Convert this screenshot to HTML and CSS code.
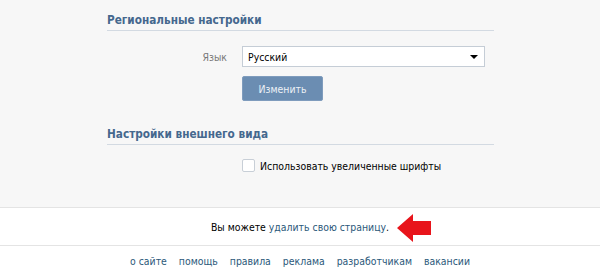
FILE: index.html
```html
<!DOCTYPE html>
<html lang="ru">
<head>
  <meta charset="UTF-8">
  <title>Настройки</title>
  <link rel="stylesheet" href="styles.css">
</head>
<body>

  <!-- Settings -->
  <div class="settings">
    <div class="column">
      <h2 class="section-title">Региональные настройки</h2>
      <div class="row">
        <span class="label">Язык</span>
        <div class="select">
          <span>Русский</span>
          <span class="select-arrow"></span>
        </div>
      </div>
      <div class="row">
        <span class="label"></span>
        <button class="button">Изменить</button>
      </div>

      <h2 class="section-title second">Настройки внешнего вида</h2>
      <div class="row check-row">
        <span class="label"></span>
        <span class="checkbox"></span>
        <span>Использовать увеличенные шрифты</span>
      </div>
    </div>
  </div>

  <!-- Delete page -->
  <div class="delete-band">
    <span class="delete-text">
      Вы можете <a href="#">удалить свою страницу</a>.
      <svg class="red-arrow" width="34" height="28" viewBox="0 0 34 28">
        <polygon points="0,14 16,0 16,7 34,7 34,21 16,21 16,28" fill="#e8141b"/>
      </svg>
    </span>
  </div>

  <!-- Footer -->
  <div class="footer">
    <a href="#">о сайте</a>
    <a href="#">помощь</a>
    <a href="#">правила</a>
    <a href="#">реклама</a>
    <a href="#">разработчикам</a>
    <a href="#">вакансии</a>
  </div>

</body>
</html>
```

FILE: styles.css
```css
body {
  font-family: "DejaVu Sans Condensed", "DejaVu Sans", sans-serif;
  font-size: 10.4px;
  color: #000;
  background: white;
  margin: 0;
}

a {
  color: #2b587a;
  text-decoration: none;
}

.settings {
  background: #f7f7f7;
  padding: 12px 0 35px;
  border-bottom: 1px solid #e4e4e4;
}

.column {
  width: 387px;
  margin-left: 107px;
}

.section-title {
  margin: 0;
  font-size: 11.7px;
  line-height: 16px;
  font-weight: bold;
  color: #45688e;
  padding-bottom: 2px;
  border-bottom: 1px solid #d3dae2;
}

.section-title.second {
  margin-top: 25px;
}

.row {
  display: flex;
  align-items: center;
  margin-top: 9px;
}

.section-title + .row {
  margin-top: 15px;
}

.label {
  width: 120px;
  margin-right: 15px;
  text-align: right;
  color: #777;
}

.select {
  width: 243px;
  height: 21px;
  background: white;
  border: 1px solid #c5cdd6;
  display: flex;
  align-items: center;
  justify-content: space-between;
  padding: 0 6px 0 5px;
  box-sizing: border-box;
}

.select-arrow {
  width: 0;
  height: 0;
  border-left: 4px solid transparent;
  border-right: 4px solid transparent;
  border-top: 4px solid #000;
}

.button {
  width: 81px;
  height: 25px;
  background: #6b8db2;
  color: #eef2f7;
  font-family: inherit;
  font-size: 10.4px;
  border: 1px solid #7f9cbd;
  border-radius: 2px;
  padding: 0;
}

.section-title + .check-row {
  margin-top: 14px;
}

.checkbox {
  width: 13px;
  height: 13px;
  background: white;
  border: 1px solid #c8cfd7;
  border-radius: 2px;
  box-sizing: border-box;
  margin-right: 5px;
}

.delete-band {
  height: 36px;
  border-bottom: 1px solid #e4e4e4;
  display: flex;
  align-items: center;
  justify-content: center;
  margin-top: 1px;
}

.delete-text {
  position: relative;
}

.red-arrow {
  position: absolute;
  left: 100%;
  top: -7px;
  margin-left: 8px;
}

.footer {
  display: flex;
  justify-content: center;
  gap: 12px;
  padding-top: 9px;
}
```
